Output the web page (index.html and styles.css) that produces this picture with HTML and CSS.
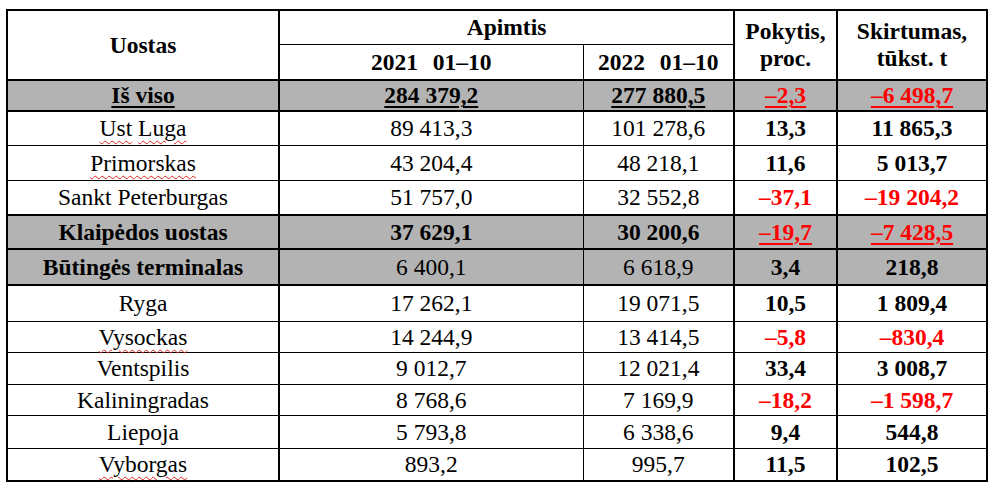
FILE: index.html
```html
<!DOCTYPE html>
<html lang="lt">
<head>
<meta charset="utf-8">
<title>Uostai</title>
<link rel="stylesheet" href="styles.css">
</head>
<body>
<div class="page">
<table class="ports">
  <colgroup>
    <col class="c-name"><col class="c-y1"><col class="c-y2"><col class="c-pct"><col class="c-diff">
  </colgroup>
  <thead>
    <tr class="h1">
      <th rowspan="2" class="name">Uostas</th>
      <th colspan="2" class="apimtis">Apimtis</th>
      <th rowspan="2" class="pct">Pokytis,<br>proc.</th>
      <th rowspan="2" class="diff">Skirtumas,<br>tūkst. t</th>
    </tr>
    <tr class="h2">
      <th class="y1">2021 <span class="period">01–10</span></th>
      <th class="y2">2022 <span class="period">01–10</span></th>
    </tr>
  </thead>
  <tbody>
    <tr class="gray total">
      <td class="name b u">Iš viso</td>
      <td class="y1 b u">284 379,2</td>
      <td class="y2 b u">277 880,5</td>
      <td class="pct b u red">–2,3</td>
      <td class="diff b u red">–6 498,7</td>
    </tr>
    <tr class="r-ust">
      <td class="name"><span class="sp">Ust</span> <span class="sp">Luga</span></td>
      <td class="y1">89 413,3</td>
      <td class="y2">101 278,6</td>
      <td class="pct b">13,3</td>
      <td class="diff b">11 865,3</td>
    </tr>
    <tr class="r-pri">
      <td class="name"><span class="sp">Primorskas</span></td>
      <td class="y1">43 204,4</td>
      <td class="y2">48 218,1</td>
      <td class="pct b">11,6</td>
      <td class="diff b">5 013,7</td>
    </tr>
    <tr class="r-spb">
      <td class="name">Sankt Peterburgas</td>
      <td class="y1">51 757,0</td>
      <td class="y2">32 552,8</td>
      <td class="pct b red">–37,1</td>
      <td class="diff b red">–19 204,2</td>
    </tr>
    <tr class="gray r-klp">
      <td class="name b">Klaipėdos uostas</td>
      <td class="y1 b">37 629,1</td>
      <td class="y2 b">30 200,6</td>
      <td class="pct b u red">–19,7</td>
      <td class="diff b u red">–7 428,5</td>
    </tr>
    <tr class="gray r-but">
      <td class="name b">Būtingės terminalas</td>
      <td class="y1">6 400,1</td>
      <td class="y2">6 618,9</td>
      <td class="pct b">3,4</td>
      <td class="diff b">218,8</td>
    </tr>
    <tr class="r-ryg">
      <td class="name">Ryga</td>
      <td class="y1">17 262,1</td>
      <td class="y2">19 071,5</td>
      <td class="pct b">10,5</td>
      <td class="diff b">1 809,4</td>
    </tr>
    <tr class="r-vys">
      <td class="name"><span class="sp">Vysockas</span></td>
      <td class="y1">14 244,9</td>
      <td class="y2">13 414,5</td>
      <td class="pct b red">–5,8</td>
      <td class="diff b red">–830,4</td>
    </tr>
    <tr class="r-ven">
      <td class="name">Ventspilis</td>
      <td class="y1">9 012,7</td>
      <td class="y2">12 021,4</td>
      <td class="pct b">33,4</td>
      <td class="diff b">3 008,7</td>
    </tr>
    <tr class="r-kal">
      <td class="name">Kaliningradas</td>
      <td class="y1">8 768,6</td>
      <td class="y2">7 169,9</td>
      <td class="pct b red">–18,2</td>
      <td class="diff b red">–1 598,7</td>
    </tr>
    <tr class="r-lie">
      <td class="name">Liepoja</td>
      <td class="y1">5 793,8</td>
      <td class="y2">6 338,6</td>
      <td class="pct b">9,4</td>
      <td class="diff b">544,8</td>
    </tr>
    <tr class="r-vyb">
      <td class="name"><span class="sp">Vyborgas</span></td>
      <td class="y1">893,2</td>
      <td class="y2">995,7</td>
      <td class="pct b">11,5</td>
      <td class="diff b">102,5</td>
    </tr>
  </tbody>
</table>
</div>
</body>
</html>
```

FILE: styles.css
```css
html, body {
  margin: 0;
  padding: 0;
  background: #ffffff;
}

.page {
  padding: 9px 0 0 6px;
}

.ports {
  border-collapse: collapse;
  table-layout: fixed;
  width: 982px;
  border: 2px solid #000;
  font-family: "Liberation Serif", "Times New Roman", serif;
  font-size: 23.5px;
  color: #000;
}

.c-name { width: 272px; }
.c-y1 { width: 304px; }
.c-y2 { width: 151px; }
.c-pct { width: 103px; }
.c-diff { width: 150px; }

.ports th,
.ports td {
  border: 1px solid #000;
  padding: 0;
  text-align: center;
  vertical-align: middle;
  line-height: 27px;
  white-space: nowrap;
}

.ports th {
  font-weight: bold;
}

.ports .name { border-right-width: 2px; }
.ports .y2 { border-right-width: 2px; }
.ports .pct { border-right-width: 2px; }
.ports th.apimtis { border-right-width: 2px; }

.h1 th { height: 33px; }
.h2 th { height: 34px; border-bottom-width: 2px; }
.ports th.name,
.ports th.pct,
.ports th.diff { border-bottom-width: 2px; }

.period { margin-left: 9px; }

.ports tr.gray td {
  background: #b3b3b3;
  border-top-width: 2px;
  border-bottom-width: 2px;
}

.b { font-weight: bold; }
.u { text-decoration: underline; text-decoration-thickness: 2px; text-underline-offset: 3px; }
.red { color: #ff0000; }

.sp {
  text-decoration: underline wavy #e02020;
  text-decoration-thickness: 1px;
  text-underline-offset: 4px;
}

.total td { height: 29px; }
.r-ust td { height: 33px; }
.r-pri td { height: 34px; }
.r-spb td { height: 33px; }
.r-klp td { height: 32px; }
.r-but td { height: 34px; }
.r-ryg td { height: 35px; }
.r-vys td { height: 30px; }
.r-ven td { height: 31px; }
.r-kal td { height: 30px; }
.r-lie td { height: 32px; }
.r-vyb td { height: 31px; }
```
